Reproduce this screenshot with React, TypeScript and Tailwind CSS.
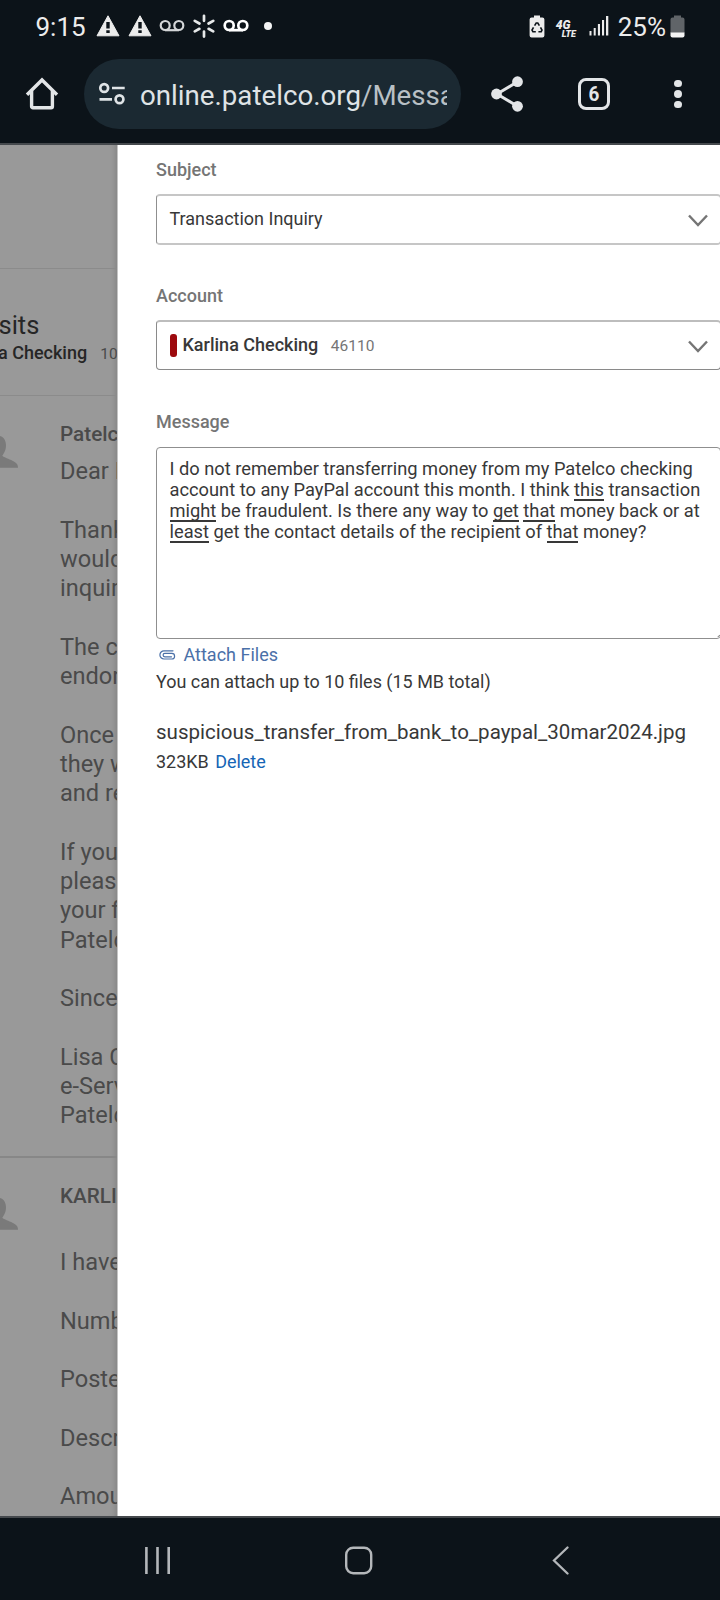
import type { ReactNode } from "react";

function Warning() {
  return (
    <svg width="24" height="22" viewBox="0 0 24 22" className="shrink-0">
      <path d="M12 0.8 23 20.8H1Z" fill="#ececec" stroke="#ececec" strokeWidth="1" strokeLinejoin="round" />
      <path d="M10.3 7h3.400v6.600h-3.400zM10.300 15.200h3.400v2.800h-3.400z" fill="#0c1319" />
    </svg>
  );
}

function Voicemail({ bold }: { bold?: boolean }) {
  return (
    <svg width="26" height="14" viewBox="0 0 26 14" fill="none" stroke={bold ? "#fff" : "#d4d6d8"} strokeWidth={bold ? 2.700 : 2.200} className="shrink-0">
      <circle cx="6.200" cy="6.500" r="4.500" />
      <circle cx="19.800" cy="6.500" r="4.500" />
      <path d="M6 11.200h14" />
    </svg>
  );
}

function Spark() {
  return (
    <svg width="22" height="24" viewBox="0 0 22 24" stroke="#e6e8e9" strokeWidth="2.700" strokeLinecap="round" className="shrink-0">
      <path d="M11 1.800v5M11 17.600v5M1.800 6.800l4.600 2.700M15.600 9.500l4.600-2.700M1.800 17.400l4.600-2.600M15.600 14.800l4.600 2.600" />
    </svg>
  );
}

function StatusBar() {
  return (
    <div className="flex h-[52px] items-center text-[26px] leading-[30px] text-[#ececec]">
      <div className="w-[60px] pl-[35.500px] pt-[2px]">9:15</div>
      <div className="ml-[36px] flex">
        <Warning />
        <span className="w-2" />
        <Warning />
      </div>
      <div className="ml-[7px]"><Voicemail /></div>
      <div className="ml-[8px]"><Spark /></div>
      <div className="ml-[8px]"><Voicemail bold /></div>
      <div className="ml-[15px] size-[8px] rounded-full bg-[#f4f4f4]" />
      <div className="ml-auto flex items-center pr-[35px]">
        <svg width="16" height="23" viewBox="0 0 16 23" className="shrink-0">
          <path d="M5 0.600h6v2h2.400a2 2 0 0 1 2 2v15.800a2 2 0 0 1-2 2H2.600a2 2 0 0 1-2-2V4.600a2 2 0 0 1 2-2H5z" fill="#ececec" />
          <path d="M5.600 10.600 7.200 8h1.600l1.600 2.600M11.500 12.300l1.500 2.700-.8 1.700H9.400M6.800 16.700H3.900L3 15l1.500-2.700" fill="none" stroke="#0c1319" strokeWidth="1.600" />
        </svg>
        <div className="ml-[11px] flex w-[24px] flex-col pt-[8px] font-black italic">
          <span className="h-[9.500px] text-[12px] leading-[11px]">4G</span>
          <span className="h-[11px] pl-[6px] text-[9px] leading-[10px]">LTE</span>
        </div>
        <svg width="20" height="22" viewBox="0 0 20 22" fill="#ececec" className="ml-[9.500px] shrink-0">
          <rect x="0.500" y="16" width="2" height="4.500" />
          <rect x="4.700" y="13" width="2" height="7.500" />
          <rect x="8.900" y="9" width="2.100" height="11.500" />
          <rect x="13" y="5" width="2.100" height="15.500" />
          <rect x="17" y="1" width="2.300" height="19.500" />
        </svg>
        <div className="ml-[8.500px] pt-[2px]">25%</div>
        <svg width="15" height="23" viewBox="0 0 15 23" className="ml-[4px] shrink-0">
          <path d="M4 0.600h7v2h1.500a2 2 0 0 1 2 2V18H0.500V4.600a2 2 0 0 1 2-2H4z" fill="#606468" />
          <path d="M0.500 17.500h14v3a2 2 0 0 1-2 2h-10a2 2 0 0 1-2-2z" fill="#f4f4f4" />
        </svg>
      </div>
    </div>
  );
}

function Toolbar() {
  return (
    <div className="flex h-[84px] items-center">
      <svg width="34" height="34" viewBox="0 0 34 34" fill="none" stroke="#e3e5e7" strokeWidth="3.400" className="ml-[25px] shrink-0">
        <path d="M2 17.800 17 3l15 14.800" />
        <path d="M6.600 14v15.500a1.300 1.300 0 0 0 1.300 1.300h18.200a1.300 1.300 0 0 0 1.300-1.300V14" />
      </svg>
      <div className="ml-[25px] flex h-[70px] w-[377px] shrink-0 items-center rounded-full bg-[#1b2932] pl-[14px]">
        <svg width="28" height="24" viewBox="0 0 28 24" fill="none" stroke="#dfe3e6" strokeWidth="2.700" className="shrink-0">
          <circle cx="6.200" cy="6" r="3.900" />
          <path d="M14 6h12.700M1.500 17.300H14" />
          <circle cx="21.500" cy="17.300" r="3.900" />
        </svg>
        <div className="ml-[14px] w-[307px] overflow-hidden whitespace-nowrap pt-[4px] text-[27.700px] leading-[36px] text-[#dfe3e6]">
          online.patelco.org<span className="text-[#b9c0c5]">/Messa</span>
        </div>
      </div>
      <svg width="34" height="36" viewBox="0 0 34 36" className="ml-[29px] shrink-0">
        <path d="M27.500 5.700 7 18l20.500 12.300" fill="none" stroke="#e3e5e7" strokeWidth="3" />
        <circle cx="27.500" cy="5.700" r="5.400" fill="#e3e5e7" />
        <circle cx="6.500" cy="18" r="5.400" fill="#e3e5e7" />
        <circle cx="27.500" cy="30.300" r="5.400" fill="#e3e5e7" />
      </svg>
      <div className="ml-[54px] flex size-[32px] shrink-0 items-center justify-center rounded-[8px] border-[3px] border-[#e3e5e7] text-[21px] font-bold leading-none text-[#e3e5e7]">
        <span className="scale-x-90">6</span>
      </div>
      <div className="ml-[64px] flex flex-col gap-[3px]">
        <span className="size-[7.500px] rounded-full bg-[#e3e5e7]" />
        <span className="size-[7.500px] rounded-full bg-[#e3e5e7]" />
        <span className="size-[7.500px] rounded-full bg-[#e3e5e7]" />
      </div>
    </div>
  );
}

function Avatar() {
  return (
    <svg width="18" height="34" viewBox="0 0 18 34" className="block" fill="#7a7a7a">
      <path d="M0 1C4 2 6.200 6 6 11 5.900 15 4 18.500 2.300 20.800 4 22.500 9 24 12.500 25.700 16.500 27.500 18 29.500 18 32.700H0Z" />
    </svg>
  );
}

function Lines({ lines }: { lines: string[] }) {
  return (
    <>
      {lines.map((line, i) => (
        <div key={i} className="h-[29.280px] whitespace-nowrap text-[23.600px] leading-[29.280px]">
          {line}
        </div>
      ))}
    </>
  );
}

const reply = [
  "Dear K", "", "Thank", "would", "inquir", "", "The c", "endor", "", "Once", "they w", "and re",
  "", "If you", "please", "your f", "Patelc", "", "Since", "", "Lisa C", "e-Serv", "Patelc",
];
const original = ["I have", "", "Numb", "", "Poste", "", "Descr", "", "Amou"];

function Thread() {
  return (
    <aside className="w-[117px] shrink-0 overflow-hidden bg-[#999] text-[#4a4a4a] shadow-[inset_-6px_0_6px_-5px_rgba(0,0,0,0.18)]">
      <div className="h-[124px] border-b border-[#8b8b8b]" />
      <div className="h-[127px] border-b border-[#8b8b8b] pt-[39px] text-[#262626]">
        <div className="-ml-[1.500px] text-[25.500px] leading-[34px]">sits</div>
        <div className="-ml-[2px] flex items-baseline whitespace-nowrap leading-[22px]">
          <span className="text-[18px] font-medium">a Checking</span>
          <span className="ml-[13px] text-[15.500px] text-[#4a4a4a]">10</span>
        </div>
      </div>
      <div className="flex h-[761.500px] border-b-2 border-[#878787] pt-[24.300px]">
        <div className="w-[60px] shrink-0 pt-[14.500px]"><Avatar /></div>
        <div>
          <div className="mb-[8px] h-[29px] whitespace-nowrap text-[20.700px] font-medium leading-[29px]">Patelc</div>
          <Lines lines={reply} />
        </div>
      </div>
      <div className="flex pt-[24.500px]">
        <div className="w-[60px] shrink-0 pt-[14.500px]"><Avatar /></div>
        <div>
          <div className="mb-[37px] h-[29px] whitespace-nowrap text-[20.700px] font-medium leading-[29px]">KARLI</div>
          <Lines lines={original} />
        </div>
      </div>
    </aside>
  );
}

function Chevron() {
  return (
    <svg width="20" height="14" viewBox="0 0 20 14" fill="none" stroke="#757575" strokeWidth="2.400" className="ml-auto mt-[3px]">
      <path d="M1 1.500 10 11l9-9.500" />
    </svg>
  );
}

function Label({ children }: { children: ReactNode }) {
  return <div className="h-5 text-[18px] font-medium leading-5 text-[#757575]">{children}</div>;
}

function U({ children }: { children: ReactNode }) {
  return <span className="inline-block h-[22px] border-b-2 border-[#383838] align-top leading-[21px]">{children}</span>;
}

function Compose() {
  return (
    <main className="w-[603px] shrink-0 overflow-hidden border-l border-[#c4c4c4] bg-white pl-[38px] pt-[15px] text-[#383838]">
      <Label>Subject</Label>
      <div className="mt-[14px] flex h-[51px] w-[565px] items-center rounded-[4px] border border-y-2 border-x-[#8f8f8f] border-y-[#c6c6c6] pl-[12.500px] pr-[12.500px]">
        <span className="-mt-[2px] text-[18px] leading-[22px]">Transaction Inquiry</span>
        <Chevron />
      </div>
      <div className="mt-[41px]"><Label>Account</Label></div>
      <div className="mt-[14px] flex h-[50px] w-[565px] items-center rounded-[4px] border border-t-2 border-[#8a8a8a] border-t-[#bdbdbd] pl-[12.500px] pr-[12.500px]">
        <span className="mr-[6px] h-[23px] w-[7px] rounded-[3px] bg-[#9d0a0e]" />
        <span className="-mt-[1px] text-[18px] font-medium leading-[22px]">Karlina Checking</span>
        <span className="ml-[12.500px] mt-px text-[15.500px] leading-[20px] text-[#757575]">46110</span>
        <Chevron />
      </div>
      <div className="mt-[42px]"><Label>Message</Label></div>
      <div className="mt-[15px] flex h-[192px] w-[565px] flex-col rounded-[4px] border border-[#8f8f8f] pl-[12.500px] pt-[9.500px] text-[18.270px]">
        <div className="h-[21px] whitespace-nowrap leading-[21px]">I do not remember transferring money from my Patelco checking</div>
        <div className="h-[21px] whitespace-nowrap leading-[21px]">account to any PayPal account this month. I think <U>this</U> transaction</div>
        <div className="h-[21px] whitespace-nowrap leading-[21px]"><U>might</U> be fraudulent. Is there any way to <U>get</U> <U>that</U> money back or at</div>
        <div className="h-[21px] whitespace-nowrap leading-[21px]"><U>least</U> get the contact details of the recipient of <U>that</U> money?</div>
        <svg width="3" height="3" viewBox="0 0 4 4" className="ml-auto mt-auto mb-[1px] block" stroke="#444" strokeWidth="1">
          <path d="M1 4 4 1" />
        </svg>
      </div>
      <div className="mt-[5px] flex h-[22px] items-center text-[18px] leading-[22px] text-[#4a70a8]">
        <svg width="17" height="10" viewBox="0 0 17 10" fill="none" stroke="#4a70a8" strokeWidth="1.200" className="ml-[2.500px] mr-[8px]" strokeLinecap="round">
          <path d="M12.500 6.800H5.800a1.700 1.700 0 0 1 0-3.400h7a2.800 2.800 0 0 1 0 5.600H5a4.100 4.100 0 0 1 0-8.200h9" />
        </svg>
        Attach Files
      </div>
      <div className="mt-[5px] h-[22px] text-[17.970px] leading-[22px]">You can attach up to 10 files (15 MB total)</div>
      <div className="mt-[25px] h-[28px] text-[20.540px] leading-[28px]">suspicious_transfer_from_bank_to_paypal_30mar2024.jpg</div>
      <div className="mt-[5px] h-[22px] text-[17.970px] leading-[22px]">
        323KB <span className="ml-[2px] text-[#1565b5]">Delete</span>
      </div>
    </main>
  );
}

function NavBar() {
  return (
    <nav className="flex h-[84px] items-start border-t-2 border-[#45494d] bg-[#0c1319] pt-[27px]">
      <svg width="28" height="30" viewBox="0 0 28 30" stroke="#b4b7ba" strokeWidth="2.600" className="ml-[144px]">
        <path d="M2.400 2v27M13.500 2v27M24.700 2v27" />
      </svg>
      <svg width="30" height="30" viewBox="0 0 30 30" fill="none" stroke="#b4b7ba" strokeWidth="2.400" className="ml-[172px]">
        <rect x="2.200" y="2.700" width="25" height="25.500" rx="7" />
      </svg>
      <svg width="20" height="30" viewBox="0 0 20 30" fill="none" stroke="#b4b7ba" strokeWidth="2.300" strokeLinecap="round" className="ml-[176px]">
        <path d="M17.500 2.500 4 15.500l13.500 13" />
      </svg>
    </nav>
  );
}

export default function App() {
  return (
    <div className="flex h-[1600px] w-[720px] flex-col overflow-hidden bg-[#0c1319] font-['Roboto',sans-serif]">
      <header className="h-[145px] shrink-0 border-b-2 border-[#45494d]">
        <StatusBar />
        <Toolbar />
      </header>
      <div className="flex h-[1371px] shrink-0 overflow-hidden">
        <Thread />
        <Compose />
      </div>
      <NavBar />
    </div>
  );
}
